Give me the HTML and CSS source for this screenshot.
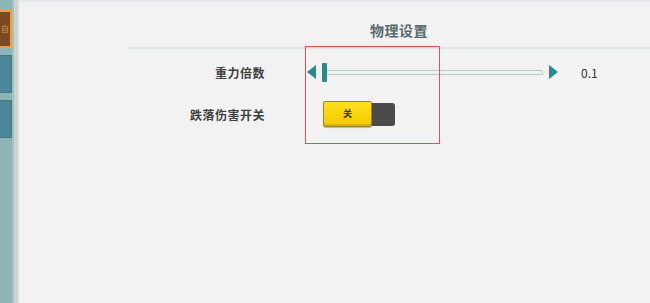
FILE: index.html
```html
<!DOCTYPE html>
<html lang="zh">
<head>
<meta charset="utf-8">
<link rel="stylesheet" href="styles.css">
</head>
<body>
<div class="app">
  <aside class="sidebar">
    <div class="tab tab-active"><span class="tab-glyph">自</span></div>
    <div class="tab tab-blue"></div>
    <div class="tab tab-blue"></div>
  </aside>
  <div class="divider"></div>
  <main class="main">
    <div class="topline"></div>
    <section class="panel">
      <h1 class="title">物理设置</h1>
      <div class="sep"></div>
      <div class="rows">
        <div class="row row-slider">
          <div class="label">重力倍数</div>
          <div class="slider">
            <span class="arrow arrow-left"></span>
            <div class="track"><span class="thumb"></span></div>
            <span class="arrow arrow-right"></span>
          </div>
          <div class="value">0.1</div>
        </div>
        <div class="row row-toggle">
          <div class="label">跌落伤害开关</div>
          <div class="toggle">
            <div class="toggle-btn">关</div>
            <div class="toggle-rest"></div>
          </div>
        </div>
      </div>
      <div class="highlight"></div>
    </section>
  </main>
</div>
</body>
</html>
```
FILE: styles.css
```css
* { box-sizing: border-box; margin: 0; padding: 0; }
html, body { width: 650px; height: 303px; overflow: hidden; }
body { background: #f2f2f2; font-family: "Noto Sans CJK SC", "Noto Sans", sans-serif; }
.app { display: flex; height: 303px; }
.sidebar {
  width: 12px; background: #8fb4b5;
  display: flex; flex-direction: column; gap: 7px; padding-top: 10px;
}
.tab { width: 12px; height: 38px; }
.tab-active {
  background: #7a4b22; border: 2px solid #f49c3e; border-left: none;
  display: flex; align-items: center; justify-content: center; overflow: hidden;
}
.tab-glyph { font-size: 8px; color: #d99a5a; line-height: 1; }
.tab-blue { background: #4c8898; border: 1px solid #3f7888; border-left: none; }
.divider {
  width: 7px; background: #c9d6cf; border-left: 2px solid #aabfb8; border-right: 1px solid #dfe6e2;
}
.main { flex: 1; display: flex; flex-direction: column; }
.topline { height: 2px; background: #e3e8ea; }
.panel { position: relative; padding-left: 108px; }
.title {
  font-size: 14px; font-weight: 700; color: #566a6b; letter-spacing: 0.5px;
  margin-left: 243px; height: 40px; line-height: 20px; padding-top: 18px;
}
.sep { height: 2px; background: #dde4e0; margin-top: 5px; }
.rows { display: flex; flex-direction: column; }
.row { display: flex; align-items: center; }
.label {
  width: 138px; text-align: right; font-size: 12px; font-weight: 700; color: #3f3f3f;
  letter-spacing: 0.5px;
}
.row-slider { height: 30px; margin-top: 8px; }
.row-toggle { height: 28px; margin-top: 13px; }
.slider { display: flex; align-items: center; margin-left: 42px; }
.arrow { width: 0; height: 0; border-top: 7px solid transparent; border-bottom: 7px solid transparent; }
.arrow-left { border-right: 9px solid #2a8a89; }
.arrow-right { border-left: 9px solid #2a8a89; margin-left: 6px; }
.track {
  position: relative; width: 221px; height: 5px; margin-left: 6px;
  background: #eef4f2; border: 1px solid #b3c9c5; border-left: none; border-radius: 0 2px 2px 0;
}
.thumb {
  position: absolute; left: 0; top: -8px; width: 5px; height: 19px; background: #2a8a89;
  border-radius: 1px;
}
.value { margin-left: 23px; font-size: 12px; color: #333; }
.toggle { display: flex; align-items: center; margin-left: 58px; }
.toggle-btn {
  width: 49px; height: 26px; background: linear-gradient(#ffe01e, #f4c800);
  border: 1px solid #9a8530; border-radius: 2px;
  box-shadow: inset 0 -2px 0 #d9ae00, 0 1px 1px rgba(0,0,0,0.25);
  font-size: 9px; font-weight: 700; color: #3e3618; text-align: center; line-height: 24px;
  position: relative; z-index: 1;
}
.toggle-rest { width: 24px; height: 23px; background: #4b4b4b; border-radius: 0 3px 3px 0; margin-left: -1px; }
.highlight {
  position: absolute; left: 286px; top: 44px; width: 135px; height: 98px;
  border: 1.5px solid #e05252;
}
```
